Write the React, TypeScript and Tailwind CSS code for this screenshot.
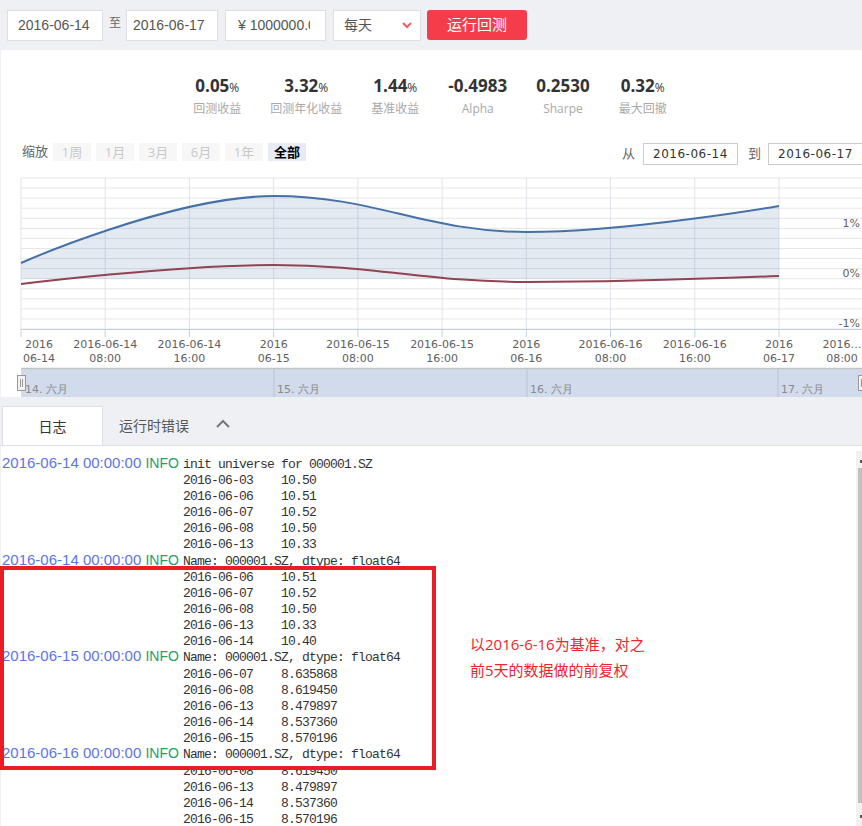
import React from "react";

type LogLine = { ts?: string; text: string };

const LOG: LogLine[] = [
  { ts: "2016-06-14 00:00:00", text: "init universe for 000001.SZ" },
  { text: "2016-06-03    10.50" },
  { text: "2016-06-06    10.51" },
  { text: "2016-06-07    10.52" },
  { text: "2016-06-08    10.50" },
  { text: "2016-06-13    10.33" },
  { ts: "2016-06-14 00:00:00", text: "Name: 000001.SZ, dtype: float64" },
  { text: "2016-06-06    10.51" },
  { text: "2016-06-07    10.52" },
  { text: "2016-06-08    10.50" },
  { text: "2016-06-13    10.33" },
  { text: "2016-06-14    10.40" },
  { ts: "2016-06-15 00:00:00", text: "Name: 000001.SZ, dtype: float64" },
  { text: "2016-06-07    8.635868" },
  { text: "2016-06-08    8.619450" },
  { text: "2016-06-13    8.479897" },
  { text: "2016-06-14    8.537360" },
  { text: "2016-06-15    8.570196" },
  { ts: "2016-06-16 00:00:00", text: "Name: 000001.SZ, dtype: float64" },
  { text: "2016-06-08    8.619450" },
  { text: "2016-06-13    8.479897" },
  { text: "2016-06-14    8.537360" },
  { text: "2016-06-15    8.570196" },
];

const STATS = [
  { value: "0.05", pct: true, label: "回测收益" },
  { value: "3.32", pct: true, label: "回测年化收益" },
  { value: "1.44", pct: true, label: "基准收益" },
  { value: "-0.4983", pct: false, label: "Alpha" },
  { value: "0.2530", pct: false, label: "Sharpe" },
  { value: "0.32", pct: true, label: "最大回撤" },
];

const RANGES = ["1周", "1月", "3月", "6月", "1年"];

const TICKS = [21, 105.2, 189.4, 273.7, 357.9, 442.1, 526.3, 610.5, 694.8, 779, 863.2];

const X_LABELS: { x: number; a: string; b: string }[] = [
  { x: 39, a: "2016", b: "06-14" },
  { x: 105.2, a: "2016-06-14", b: "08:00" },
  { x: 189.4, a: "2016-06-14", b: "16:00" },
  { x: 273.7, a: "2016", b: "06-15" },
  { x: 357.9, a: "2016-06-15", b: "08:00" },
  { x: 442.1, a: "2016-06-15", b: "16:00" },
  { x: 526.3, a: "2016", b: "06-16" },
  { x: 610.5, a: "2016-06-16", b: "08:00" },
  { x: 694.8, a: "2016-06-16", b: "16:00" },
  { x: 779, a: "2016", b: "06-17" },
  { x: 842, a: "2016…", b: "08:00" },
];

const BLUE =
  "M 21 263 C 21 263 172.8 196 274 196 C 375.2 196 425.8 232 527 232 C 627.8 232 779 206 779 206";
const RED =
  "M 21 284 C 21 284 172.8 265 274 265 C 375.2 265 425.8 282 527 282 C 627.8 282 779 276 779 276";

function Chart() {
  const hLines = Array.from({ length: 16 }, (_, i) => 178 + i * 10.07);
  return (
    <svg
      width="861"
      height="227"
      viewBox="1 170 861 227"
      className="block font-['DejaVu_Sans',sans-serif]"
    >
      {hLines.map((y) => (
        <line key={y} x1="21" x2="862" y1={y} y2={y} stroke="#e6e6e6" strokeWidth="1" />
      ))}
      {TICKS.map((x) => (
        <line key={x} x1={x} x2={x} y1="178" y2="329" stroke="#dfe3ea" strokeWidth="1" />
      ))}
      <path d={`${BLUE} L 779 279 L 21 279 Z`} fill="rgba(69,114,167,0.15)" />
      <path d={BLUE} fill="none" stroke="#4670a8" strokeWidth="2" />
      <path d={RED} fill="none" stroke="#934252" strokeWidth="2" />
      <line x1="21" x2="862" y1="329.5" y2="329.5" stroke="#c0d0e0" strokeWidth="1" />
      {TICKS.map((x) => (
        <line key={`t${x}`} x1={x} x2={x} y1="329" y2="337" stroke="#c0d0e0" strokeWidth="1" />
      ))}
      {X_LABELS.map((l) => (
        <g key={l.x} fontSize="11" fill="#606060" textAnchor="middle">
          <text x={l.x} y="348">{l.a}</text>
          <text x={l.x} y="362">{l.b}</text>
        </g>
      ))}
      <g fontSize="11" fill="#606060" textAnchor="end">
        <text x="860" y="226.5">1%</text>
        <text x="860" y="277">0%</text>
        <text x="860" y="327">-1%</text>
      </g>

      {/* navigator */}
      <rect x="21" y="368" width="842" height="29" fill="#d1dbec" />
      <line x1="21" x2="862" y1="368.5" y2="368.5" stroke="#c4c4c4" strokeWidth="1.5" />
      {[274, 527, 778].map((x) => (
        <line key={x} x1={x} x2={x} y1="369" y2="397" stroke="#b8c3d8" strokeWidth="1" />
      ))}
      <g fontSize="11" fill="#8a8a8a">
        <text x="25" y="393">14. 六月</text>
        <text x="277" y="393">15. 六月</text>
        <text x="530" y="393">16. 六月</text>
        <text x="781" y="393">17. 六月</text>
      </g>
      <g stroke="#999" strokeWidth="1">
        <rect x="17.5" y="375.5" width="8" height="15" fill="#f2f2f2" />
        <line x1="20.5" x2="20.5" y1="379" y2="387" />
        <line x1="22.5" x2="22.5" y1="379" y2="387" />
        <rect x="858.5" y="375.5" width="8" height="15" fill="#f2f2f2" />
        <line x1="861.5" x2="861.5" y1="379" y2="387" />
      </g>
    </svg>
  );
}

export default function App() {
  return (
    <div className="relative h-[826px] w-[862px] overflow-hidden bg-[#eff0f4] font-['Open_Sans','Noto_Sans_CJK_SC',sans-serif]">
      {/* toolbar */}
      <div className="flex h-[50px] items-start pl-[7px] pt-[10px] font-['Liberation_Sans','Noto_Sans_CJK_SC',sans-serif] text-[14px] text-[#555]">
        <div className="flex h-[31px] w-[96px] items-center border border-[#dcdfe6] bg-white pl-[10px]">
          2016-06-14
        </div>
        <span className="ml-[6px] mr-[5px] mt-[4px] text-[12px] leading-[18px] text-[#666]">至</span>
        <div className="flex h-[31px] w-[92px] items-center border border-[#dcdfe6] bg-white pl-[6px]">
          2016-06-17
        </div>
        <div className="ml-[7px] flex h-[31px] w-[101px] items-center border border-[#dcdfe6] bg-white pl-[12px]">
          <div className="w-[72px] overflow-hidden whitespace-nowrap">¥ 1000000.00</div>
        </div>
        <div className="ml-[7px] flex h-[31px] w-[88px] items-center justify-between border border-[#dcdfe6] bg-white pl-[10px] pr-[8px]">
          <span>每天</span>
          <svg width="10" height="7" viewBox="0 0 10 7">
            <polyline points="1,1 5,5 9,1" fill="none" stroke="#ef5e67" strokeWidth="2" />
          </svg>
        </div>
        <button className="ml-[6px] h-[30px] w-[100px] rounded-[3px] bg-[#f43c4a] text-[15px] text-white">
          运行回测
        </button>
      </div>

      {/* stats + chart */}
      <div className="ml-[1px] flex h-[347px] flex-col overflow-hidden bg-white">
        <div className="flex h-[93px] shrink-0 justify-center gap-[29px] pr-[3px] pt-[24px]">
          {STATS.map((s) => (
            <div key={s.label} className="text-center">
              <div className="h-[23px] text-[17px] font-bold leading-[23px] text-[#333]">
                {s.value}
                {s.pct && <span className="text-[12px] font-normal">%</span>}
              </div>
              <div className="mt-[3px] h-[18px] text-[12px] leading-[18px] text-[#a9a9a9]">{s.label}</div>
            </div>
          ))}
        </div>

        <div className="flex h-[27px] shrink-0 items-start whitespace-nowrap">
          <div className="flex h-[18px] items-center gap-[5px] pl-[21px] text-[13px]">
            <span className="text-[#666]">缩放</span>
            {RANGES.map((r) => (
              <span key={r} className="h-[18px] w-[38px] bg-[#f7f7f7] text-center leading-[18px] text-[#c8c8c8]">
                {r}
              </span>
            ))}
            <span className="h-[18px] w-[38px] bg-[#e6ebf5] text-center font-bold leading-[18px] text-black">
              全部
            </span>
          </div>
          <div className="ml-[316px] flex h-[22px] shrink-0 items-center text-[13px] text-[#666]">
            <span>从</span>
            <div className="ml-[8px] flex h-[22px] w-[95px] items-center border border-[#ccc] pl-[9px] font-['DejaVu_Sans',sans-serif] text-[12px] tracking-[0.5px] text-[#333]">
              2016-06-14
            </div>
            <span className="ml-[10px]">到</span>
            <div className="ml-[7px] flex h-[22px] w-[97px] shrink-0 items-center border border-[#ccc] pl-[9px] font-['DejaVu_Sans',sans-serif] text-[12px] tracking-[0.5px] text-[#333]">
              2016-06-17
            </div>
          </div>
        </div>

        <Chart />
      </div>

      {/* tabs */}
      <div className="flex h-[49px] items-end border-b border-[#dde0e6] pl-[2px]">
        <div className="flex h-[39px] w-[101px] items-center justify-center border border-b-0 border-[#dde0e6] bg-white text-[14px] text-[#333]">
          日志
        </div>
        <div className="flex h-[39px] items-center pl-[16px] text-[14px] text-[#555]">运行时错误</div>
        <div className="ml-[27px] flex h-[39px] items-center pb-[4px]">
          <svg width="14" height="9" viewBox="0 0 14 9">
            <polyline points="1,8 7,2 13,8" fill="none" stroke="#777" strokeWidth="2" />
          </svg>
        </div>
      </div>

      {/* log */}
      <div className="ml-[1px] flex h-[380px] bg-white">
        <div className="flex-1 overflow-hidden pl-[1px] pt-[7.6px]">
          {LOG.map((l, i) => (
            <div key={i} className="h-[16.16px] whitespace-pre leading-[16.16px]">
              <span className="inline-block w-[181px] font-['Liberation_Sans',sans-serif] text-[15px]">
                {l.ts && (
                  <>
                    <span className="text-[#5d74e8]">{l.ts}</span>{" "}
                    <span className="text-[14px] text-[#21a06a]">INFO</span>
                  </>
                )}
              </span>
              <span className="font-['Liberation_Mono',monospace] text-[13px] tracking-[-0.8px] text-[#333]">
                {l.text}
              </span>
            </div>
          ))}
        </div>
        <div className="mt-[5px] flex w-[6px] shrink-0 flex-col bg-[#f1f1f1]">
          <div className="ml-[4px] mt-[9px] h-[3px] w-[2px] bg-[#555]" />
          <div className="ml-[2px] mt-[5px] h-[335px] bg-[#c1c1c1]" />
          <div className="ml-[4px] mt-[12px] h-[3px] w-[2px] bg-[#555]" />
        </div>
      </div>

      {/* annotation */}
      <div className="absolute left-0 top-[566px] h-[204px] w-[436px] border-[4px] border-[#ec1c24]" />
      <div className="absolute left-[470px] top-[631px] text-[15px] leading-[26px] text-[#f0232b]">
        <div>以2016-6-16为基准，对之</div>
        <div>前5天的数据做的前复权</div>
      </div>
    </div>
  );
}
